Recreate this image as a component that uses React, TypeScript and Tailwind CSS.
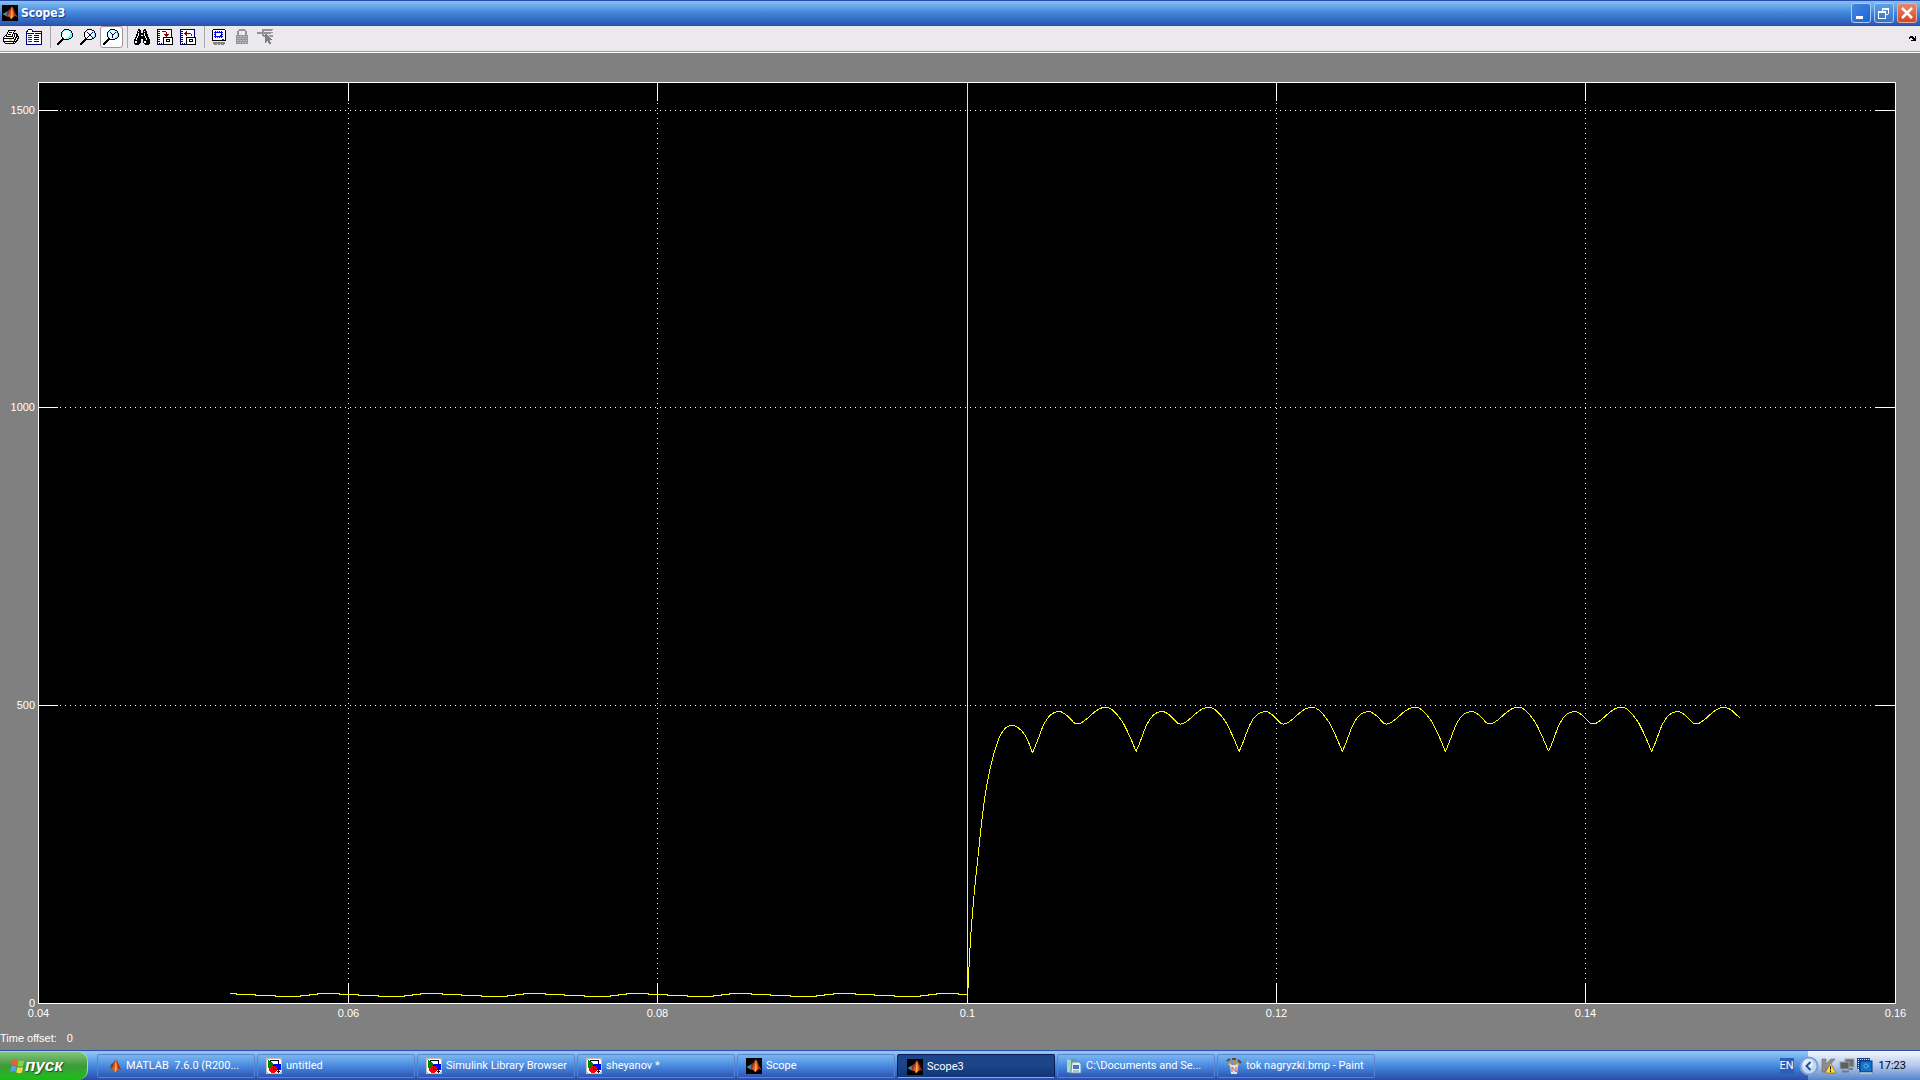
import React from 'react';

const INK: Record<string, string> = {
  k: '#000000',
  w: '#ffffff',
  n: '#000080',
  b: '#0000ff',
  c: '#70f4f8',
  r: '#900000',
  R: '#ff0000',
  y: '#f0e000',
  g: '#808080',
  G: '#008000',
  s: '#c0c0c0',
  d: '#949494',
};

const ICONS = {
  print: [
    '................',
    '.....kkkkkkkk...',
    '.....kwwwwwk....',
    '....kwkkkwk.....',
    '....kwwwwwkkkk..',
    '...kwkkkwkwkwkk.',
    '..kkwwwwwkwkwkk.',
    '.kwkkkkkkkwkwkkk',
    'kwwwwwwwwwkwkkwk',
    'kkkkkkkkkkkwkwkk',
    'kwwwwwyyywwkkwk.',
    'kwwwwwyyywwkwkk.',
    'kkkkkkkkkkkkkk..',
    '.kwwwwwwwwkwk...',
    '..kkkkkkkkkk....',
    '................',
  ],
  params: [
    '..nnnn..........',
    '.nwwwwn.........',
    'nnwwwwnnnnnnnnnn',
    'nwwwwwwwwwwwwwwn',
    'nnnnnnnnwnnnnnnn',
    'nwwwwwwwwwwwwwwn',
    'nwrrrrwwnnnnnwwn',
    'nwwwwwwwwwwwwwwn',
    'nwrrrrwwnnnnnwwn',
    'nwwwwwwwwwwwwwwn',
    'nwrrrrwwnnnnnwwn',
    'nwwwwwwwwwwwwwwn',
    'nwrrrrwwnnnnnwwn',
    'nwwwwwwwwwwwwwwn',
    'nwwwwwwwwwwwwwwn',
    'nnnnnnnnnnnnnnnn',
  ],
  zoom: [
    '.......kkkkk....',
    '......kccwwckk..',
    '.....kcwwwwwwck.',
    '....kcwwwwwwwck.',
    '....kcwwwwwwwwck',
    '....kwwwwwwwwcck',
    '....kwwwwwwwwcck',
    '....kwwwwwwwccck',
    '.....kwwwwwccck.',
    '.....kkwwccckk..',
    '....kkkkkkkk....',
    '...kkk..........',
    '..kkk...........',
    '.kkk............',
    'kkk.............',
    'kk..............',
  ],
  zoomX: [
    '.......kkkkk....',
    '......kcwwwckk..',
    '.....kcwwwwwwck.',
    '....kcwnwwwwnck.',
    '....kwwwnwwnwwck',
    '....kwwwwnnwwwck',
    '....kwwwwnnwwwck',
    '....kwwwnwwnwcck',
    '.....kwnwwwwnck.',
    '.....kkwwwwckk..',
    '....kkkkkkkk....',
    '...kkk..........',
    '..kkk...........',
    '.kkk............',
    'kkk.............',
    'kk..............',
  ],
  zoomY: [
    '.......kkkkk....',
    '......kcwwwckk..',
    '.....kcwwwwwwck.',
    '....kcwnwwwwnck.',
    '....kwwwnwwnwwck',
    '....kwwwwnnwwwck',
    '....kwwwwnwwwwck',
    '....kcwwwnwwwcck',
    '.....kwwwnwwcck.',
    '.....kkwwwcckk..',
    '....kkkkkkkk....',
    '...kkk..........',
    '..kkk...........',
    '.kkk............',
    'kkk.............',
    'kk..............',
  ],
  find: [
    '....kk....kk....',
    '....kkk..kkk....',
    '...kwkk..kwkk...',
    '...kkkk..kkkk...',
    '...kwkkkkkwkk...',
    '..kkwkkkkkwkkk..',
    '..kkwkkwwkwkkk..',
    '..kwkkkkkkkwkk..',
    '.kkwkkkkkkkwkkk.',
    '.kwkkkkkkkkkwkk.',
    'kkwkkkkwwkkkwkkk',
    'kkkkkkk..kkkkkkk',
    'kwwkkkk..kwwkkkk',
    'kwwkkkk..kwwkkkk',
    'kkkkkk....kkkkkk',
    '.kkkk......kkkk.',
  ],
  saveAxes: [
    'nnnnnnnnnnnnnnn.',
    'nwwwwwwwwwwwwwn.',
    'nnnwwrrrrwwwwwn.',
    'nwwwwwwwwrwwwwn.',
    'nnnwwwwwwrwwwwn.',
    'nwwwwwwrrrrrwwn.',
    'nnnwwwwwrrrwwwn.',
    'nwwwwwwwwrwwwwn.',
    'nnnwwwkkkkkkkkkk',
    'nwwwwwkwwwwwwwwk',
    'nnnwwwkwwkkkkwwk',
    'nwwwwwkwwkwwkwwk',
    'nnnwwwkwwkkkkwwk',
    'nwwwwwkwwwwwwwwk',
    'nwnwnwkwwwwwwwwk',
    'nnnnnnkkkkkkkkkk',
  ],
  restoreAxes: [
    'nnnnnnnnnnnnnnn.',
    'nwwwwwwwwwwwwwn.',
    'nnnwwwrwwwwwwwn.',
    'nwwwwrrwwwwwwwn.',
    'nnnwrrrrrrrwwwn.',
    'nwwwwrrwwwwrwwn.',
    'nnnwwwrwwwwrwwn.',
    'nwwwwwwwwwwwwwn.',
    'nnnwwwkkkkkkkkkk',
    'nwwwwwkwwwwwwwwk',
    'nnnwwwkwwkkkkwwk',
    'nwwwwwkwwkwwkwwk',
    'nnnwwwkwwkkkkwwk',
    'nwwwwwkwwwwwwwwk',
    'nwnwnwkwwwwwwwwk',
    'nnnnnnkkkkkkkkkk',
  ],
  floating: [
    '..kkkkkkkkkkkk..',
    '.kwwwwwwwwwwwwk.',
    '.kwwbwbwbwbwwwk.',
    '.kwbbbbbbbbbwwk.',
    '.kwwbwwwwwbwwwk.',
    '.kwbbwwwwwbbwwk.',
    '.kwwbwwwwbbwwwk.',
    '.kwbbbbbbbbbwwk.',
    '.kwwbwbwbwbwwwk.',
    '.kwwwwwwwwwwwwk.',
    '.kwwwwwwwwwrrwk.',
    '.kkkkkkkkkkkkkk.',
    '................',
    '..gggggggggggg..',
    '..gdgdgdgdgdgg..',
    '...ggg.gg.ggg...',
  ],
  lock: [
    '.....dddddd.....',
    '....dddddddd....',
    '...dd......dd...',
    '...dd......dd...',
    '...dd......dd...',
    '...dd......dd...',
    '..dddddddddddd..',
    '..dssdssdssdsd..',
    '..dddddddddddd..',
    '..dsdssdssdssd..',
    '..dddddddddddd..',
    '..dssdssdssdsd..',
    '..dddddddddddd..',
    '..dsdssdssdssd..',
    '..dddddddddddd..',
    '................',
  ],
  select: [
    '.....ddddddddddd',
    '.....dddddddddd.',
    '.....dd.........',
    'dddddddddddddddd',
    'dddddddddddddd..',
    '.....dd.gg......',
    '.....dddggg.dddd',
    '......ddgggg.ddd',
    '........ggggg...',
    '........gggggg..',
    '........ggggggg.',
    '........ggggg...',
    '........gg.gg...',
    '........g..ggg..',
    '............gg..',
    '................',
  ],
  model: [
    'ssssssssssssssss',
    'sswwwwwwwwwwwwss',
    'swGwkkkkkkkkkwws',
    'swGGkwwwwwwwkwws',
    'swGGGGwwwwwwkwws',
    'swGGGGGwwwwwkwws',
    'swGGGGGGbbbbbbbs',
    'swGGGGGkbbbbbbbs',
    'swGGGRRRRbbbbbbs',
    'swGGRRRkRRbbbbbs',
    'swwRRRRkRRRbbbbs',
    'swwRRRRkkkRbkbbs',
    'swwRRRRRRRRwkwws',
    'swwwRRRRRRwkkkws',
    'sswwwRRRRwwwkwss',
    'ssssssssssssssss',
  ],
  corner: [
    '.......',
    '.kkk..k',
    'kkkkk.k',
    'k..kkkk',
    '....kkk',
    '..kkkkk',
  ],
};

type IconName = keyof typeof ICONS;

function PixelIcon({ name }: { name: IconName }) {
  const rows = ICONS[name];
  return (
    <svg
      width={rows[0].length}
      height={rows.length}
      viewBox={`0 0 ${rows[0].length} ${rows.length}`}
      shapeRendering="crispEdges"
      className="shrink-0"
      aria-hidden="true"
    >
      {rows.map((row, y) =>
        row.split('').map((ch, x) =>
          ch === '.' ? null : <rect key={`${x}-${y}`} x={x} y={y} width="1" height="1" fill={INK[ch]} />
        )
      )}
    </svg>
  );
}

function MatlabIcon({ dark = true }: { dark?: boolean }) {
  return (
    <svg width="16" height="16" viewBox="0 0 16 16" className="shrink-0" aria-hidden="true">
      {dark && <rect width="16" height="16" fill="#000" />}
      <path d="M0.5 9 L5 6.5 L7 8 L4.5 11.5 Z" fill="#3f8fae" />
      <path d="M5 6.5 L7.5 4.5 L9.5 1.5 L7.5 9 L4.5 11.5 Z" fill="#7b3a2e" />
      <path d="M9.8 1 C11.5 3 12.5 8 15.5 12 C13 10 12 11 9 14.5 C8 12 7 11 4.5 11.5 C7.5 10 8.5 4 9.8 1 Z" fill="#e0561c" />
      <path d="M9.9 2.5 C10.5 6 11 8 10.5 12.5 L9 14 C8.3 12.5 9.3 7 9.9 2.5 Z" fill="#f8b050" />
      <path d="M10.5 2 C12 4 13 9 15.5 12 L12.5 10.5 Z" fill="#9c2410" />
    </svg>
  );
}

function FolderIcon() {
  return (
    <svg width="16" height="16" viewBox="0 0 16 16" className="shrink-0" aria-hidden="true">
      <path d="M1 1 L10 1 L10 15 L1 13 Z" fill="#5fa58e" />
      <path d="M1 1 L5 2 L5 15 L1 14 Z" fill="#a5d8c4" />
      <path d="M6 4 H13 L15 6 V15 H5 V13 Z" fill="#e8eef4" stroke="#6f8ba0" strokeWidth="1" />
      <rect x="7" y="7" width="6" height="4" fill="#3b7cc4" />
      <path d="M7 13 H13" stroke="#7795aa" />
    </svg>
  );
}

function PaintIcon() {
  return (
    <svg width="16" height="16" viewBox="0 0 16 16" className="shrink-0" aria-hidden="true">
      <path d="M6 8 L2 2 M8 8 L8 1 M9 8 L13 3" stroke="#c88a48" strokeWidth="2" />
      <path d="M1 3 L4 1 M6 1 H10 M12 2 L15 5" stroke="#67432f" strokeWidth="2" />
      <path d="M3 6 L6 8 M12 6 L10 8" stroke="#e8d05c" strokeWidth="2" />
      <path d="M4 7 H12 L11 16 H5 Z" fill="#dce2ec" />
      <path d="M6 14 V9 L10 14 V9" stroke="#d6524b" fill="none" />
    </svg>
  );
}

function WindowsFlag() {
  return (
    <svg width="15" height="16" viewBox="0 0 16 16" className="shrink-0" aria-hidden="true">
      <path d="M2.5 2 Q5 0 8 1.5 L7 7.5 Q4.5 6 1.5 7.5 Z" fill="#ec6130" />
      <path d="M9 2 Q12 3.5 15 2 L14 8 Q11 9.5 8 8 Z" fill="#8bd047" />
      <path d="M1.3 8.5 Q4 7 6.8 8.5 L5.8 14 Q3 12.5 0.3 14 Z" fill="#5aa0f0" />
      <path d="M7.8 9 Q10.8 10.5 13.8 9 L12.8 15 Q10 16.5 6.8 15 Z" fill="#fbd34a" />
    </svg>
  );
}

type Pt = [number, number];

// Catmull-Rom through the samples, cusps are kept by drawing each lobe pair on its own
function smooth(pts: Pt[]) {
  let d = `M${pts[0][0]} ${pts[0][1]}`;
  for (let i = 0; i < pts.length - 1; i++) {
    const p0 = pts[i - 1] || pts[i];
    const p1 = pts[i];
    const p2 = pts[i + 1];
    const p3 = pts[i + 2] || p2;
    d += ` C${p1[0] + (p2[0] - p0[0]) / 6} ${p1[1] + (p2[1] - p0[1]) / 6} ${p2[0] - (p3[0] - p1[0]) / 6} ${p2[1] - (p3[1] - p1[1]) / 6} ${p2[0]} ${p2[1]}`;
  }
  return d;
}

const PERIOD = 103.1;

const RISE: Pt[] = [
  [967.5, 1000], [968.5, 977], [970.5, 940], [973, 907], [975.5, 880], [978.5, 852], [982, 819], [986, 790],
  [990.5, 767], [995, 750], [1000, 736], [1006, 727.5], [1012.5, 725.5], [1018.5, 728], [1025, 735], [1030, 746], [1032.5, 753],
];

const RIPPLE: Pt[] = [
  [0, 751.5], [4, 742], [11, 724], [18, 714.5], [26, 711.5], [32, 714], [37, 718.5], [42, 723.5], [47, 723.5],
  [53, 719.5], [61, 712.5], [67, 708.5], [73, 707.5], [79, 709.5], [89, 721], [97, 737], [103.1, 751.5],
];

const LAST: Pt[] = [...RIPPLE.slice(0, 13), [79, 709.5], [85, 715], [88.5, 718]];

const IDLE: Pt[] = [[0, 993.5], [22, 994.5], [41, 995.5], [61, 996.5], [87, 995.5], [95, 994.5]];

function idlePath() {
  let d = 'M230 993.5 H236 V994.5 H255 V995.5 H275 V996.5 H300 V995.5 H309 V994.5';
  for (let x = 317; x < 967; x += PERIOD) {
    for (const [dx, y] of IDLE) {
      const px = Math.min(Math.round(x + dx), 967);
      d += ` H${px} V${y}`;
    }
  }
  return d;
}

const X_TICKS = [
  { x: 38.5, label: '0.04' },
  { x: 348.5, label: '0.06' },
  { x: 657.5, label: '0.08' },
  { x: 967.5, label: '0.1' },
  { x: 1276.5, label: '0.12' },
  { x: 1585.5, label: '0.14' },
  { x: 1895.5, label: '0.16' },
];

const Y_TICKS = [
  { y: 110.5, label: '1500' },
  { y: 407.5, label: '1000' },
  { y: 705.5, label: '500' },
  { y: 1003.5, label: '0' },
];

function ScopePlot() {
  return (
    <svg viewBox="0 53 1920 977" className="block min-h-0 w-full flex-1" role="img" aria-label="Scope3">
      <rect x="38.5" y="82.5" width="1857" height="921" fill="#000" stroke="#fff" shapeRendering="crispEdges" />
      <g stroke="#fff" shapeRendering="crispEdges">
        {X_TICKS.slice(1, -1).map(({ x }) => (
          <React.Fragment key={x}>
            <path d={`M${x} 82 V101 M${x} 984 V1003`} />
            <path d={`M${x} 103 V984`} strokeDasharray="1 4" />
          </React.Fragment>
        ))}
        {Y_TICKS.slice(0, -1).map(({ y }) => (
          <React.Fragment key={y}>
            <path d={`M38 ${y} H58 M1875 ${y} H1895`} />
            <path d={`M60 ${y} H1875`} strokeDasharray="1 4" />
          </React.Fragment>
        ))}
      </g>
      <g stroke="#ff0" fill="none" shapeRendering="crispEdges">
        <path d={idlePath()} />
        <path d="M967.5 83 V999" />
        <path d={smooth(RISE)} />
        {[0, 1, 2, 3, 4, 5, 6].map((i) => (
          <path
            key={i}
            d={smooth((i === 6 ? LAST : RIPPLE).map(([x, y]): Pt => [1033 + i * PERIOD + x, y]))}
          />
        ))}
      </g>
      <g fill="#fff" fontSize="11" className="font-['Liberation_Sans',Arial,sans-serif]">
        {X_TICKS.map(({ x, label }) => (
          <text key={label} x={x} y="1017" textAnchor="middle">{label}</text>
        ))}
        {Y_TICKS.map(({ y, label }) => (
          <text key={label} x="35" y={y + 3} textAnchor="end">{label}</text>
        ))}
      </g>
    </svg>
  );
}

const TOOLS: { icon: IconName; label: string }[][] = [
  [
    { icon: 'print', label: 'Print' },
    { icon: 'params', label: 'Parameters' },
  ],
  [
    { icon: 'zoom', label: 'Zoom' },
    { icon: 'zoomX', label: 'Zoom X-axis' },
    { icon: 'zoomY', label: 'Zoom Y-axis' },
  ],
  [
    { icon: 'find', label: 'Autoscale' },
    { icon: 'saveAxes', label: 'Save current axes settings' },
    { icon: 'restoreAxes', label: 'Restore saved axes settings' },
  ],
  [
    { icon: 'floating', label: 'Floating scope' },
    { icon: 'lock', label: 'Lock axes selection' },
    { icon: 'select', label: 'Signal selection' },
  ],
];

function Toolbar() {
  return (
    <div className="flex h-[27px] shrink-0 items-start border-b border-white bg-[#ece9ee] pr-1 shadow-[inset_0_-1px_0_#9c9c9c]">
      {TOOLS.map((group, i) => (
        <div key={i} className="flex items-center">
          {i > 0 && <div className="mx-[3px] h-[22px] w-[2px] border-r border-[#a8a8ac]" />}
          {group.map(({ icon, label }) => (
            <button
              key={icon}
              aria-label={label}
              aria-pressed={icon === 'zoomY'}
              className={`flex h-[22px] w-[23px] items-center ${
                icon === 'zoomY' ? 'rounded-[3px] border border-[#98989c] bg-white pl-[2px]' : 'pl-[3px]'
              }`}
            >
              <PixelIcon name={icon} />
            </button>
          ))}
        </div>
      ))}
      <button aria-label="Dock" className="mt-[9px] ml-auto">
        <PixelIcon name="corner" />
      </button>
    </div>
  );
}

function TitleBar() {
  return (
    <header className="flex h-[26px] shrink-0 items-center border-y border-[#2a4db0] bg-linear-to-b from-[#86c0f2] via-[#4186dc] to-[#2b55b0] pl-[2px] pr-[3px]">
      <MatlabIcon />
      <h1 className="ml-[3px] font-['DejaVu_Sans_Condensed','DejaVu_Sans',sans-serif] text-[12px] leading-4 font-bold text-white [text-shadow:1px_1px_0_#1c3c8c]">
        Scope3
      </h1>
      <div className="ml-auto flex gap-[3px]">
        <button aria-label="Minimize" className="h-5 w-5 rounded-[3px] border border-[#a4cdf5] bg-linear-to-br from-[#4787d8] to-[#1463e0]">
          <svg viewBox="0 0 18 18" className="block"><path d="M4 13.5 H11" stroke="#fff" strokeWidth="3" /></svg>
        </button>
        <button aria-label="Restore" className="h-5 w-5 rounded-[3px] border border-[#a4cdf5] bg-linear-to-b from-[#5f9fe6] to-[#3670c8]">
          <svg viewBox="0 0 18 18" className="block" fill="none" stroke="#fff" shapeRendering="crispEdges">
            <path d="M7 4.5 H14 M13.5 4 V10 M11 10.5 H13 M7.5 4 V7" />
            <path d="M7 5 H14" />
            <path d="M3.5 8 V14.5 H10.5 V8 M3 7.5 H11 M3 8.5 H11" />
          </svg>
        </button>
        <button aria-label="Close" className="h-5 w-5 rounded-[3px] border border-[#e8b0a8] bg-linear-to-b from-[#e88468] to-[#d8431c]">
          <svg viewBox="0 0 18 18" className="block"><path d="M4 4 L14 14 M14 4 L4 14" stroke="#fff" strokeWidth="2.5" /></svg>
        </button>
      </div>
    </header>
  );
}

const TASKS: { label: string; icon: React.ReactNode; active?: boolean }[] = [
  { label: 'MATLAB  7.6.0 (R200...', icon: <MatlabIcon dark={false} /> },
  { label: 'untitled', icon: <PixelIcon name="model" /> },
  { label: 'Simulink Library Browser', icon: <PixelIcon name="model" /> },
  { label: 'sheyanov *', icon: <PixelIcon name="model" /> },
  { label: 'Scope', icon: <MatlabIcon /> },
  { label: 'Scope3', icon: <MatlabIcon />, active: true },
  { label: 'C:\\Documents and Se...', icon: <FolderIcon /> },
  { label: 'tok nagryzki.bmp - Paint', icon: <PaintIcon /> },
];

function Tray() {
  return (
    <div className="ml-auto flex h-full shrink-0 items-center">
      <span className="flex h-4 w-[14px] items-center justify-center bg-[#2f5fb4] text-white">EN</span>
      <div className="ml-[14px] flex h-full items-center bg-linear-to-b from-[#f4f7fd] via-[#b4c9ec] to-[#5585cc] pr-[14px] text-black">
        <button aria-label="Show hidden icons" className="-ml-[9px]">
          <svg width="20" height="20" viewBox="0 0 20 20" className="block">
            <circle cx="10" cy="10" r="8.5" fill="#c3d7f3" stroke="#7e9fd6" strokeWidth="2" />
            <circle cx="9" cy="8" r="5" fill="#f2f7fe" opacity=".7" />
            <path d="M11.5 6 L7.5 10 L11.5 14" fill="none" stroke="#1f4f94" strokeWidth="2" />
          </svg>
        </button>
        <svg width="16" height="16" viewBox="0 0 16 16" className="ml-[2px]">
          <path d="M1 1 H5 V6 L10 1 H14 L8 8 L12 14 H8 L5 10 V14 H1 Z" fill="#8d8d8d" stroke="#5f5f5f" strokeWidth=".5" />
          <path d="M9.5 5 L15 15 H4 Z" fill="#ffd83c" stroke="#98761c" strokeWidth=".8" />
          <path d="M9.5 8 V11.5 M9.5 12.5 V14" stroke="#000" />
        </svg>
        <svg width="16" height="16" viewBox="0 0 16 16" className="ml-[2px]">
          <rect x="6" y="1" width="9" height="8" fill="#6a6f73" stroke="#a0a5a8" />
          <path d="M9 11 H14" stroke="#777" strokeWidth="2" />
          <rect x="1" y="4" width="9" height="7" fill="#5a5f63" stroke="#9ba0a4" />
          <path d="M3 13.5 H10" stroke="#777" strokeWidth="2" />
        </svg>
        <svg width="16" height="16" viewBox="0 0 16 16" className="ml-[2px]">
          <path d="M0 0 H13 V13 H3 L0 10 Z" fill="#1b3f84" />
          <path d="M1 1.5 H12 M1.5 1 V12" stroke="#dfe8f5" strokeDasharray="1 1" />
          <rect x="3" y="3" width="12" height="11" fill="#1474c8" stroke="#0c3470" />
          <circle cx="9" cy="8" r="2" fill="none" stroke="#bfe4ff" strokeDasharray="1 1" />
          <path d="M3 15 H15" stroke="#e4e4d8" />
        </svg>
        <time className="ml-[6px]">17:23</time>
      </div>
    </div>
  );
}

function Taskbar() {
  return (
    <footer className="flex h-[30px] shrink-0 items-center border-t border-[#2a50b0] bg-linear-to-b from-[#8cc4f6] from-5% via-[#4084dc] via-55% to-[#2a4ca8] font-['Roboto','Liberation_Sans',sans-serif] text-[11px] leading-4 text-white">
      <button className="flex h-full w-[88px] shrink-0 items-center rounded-r-[10px] border-t border-r border-[#a8dca0] bg-linear-to-b from-[#84c47c] via-[#3b9a38] to-[#10c010] pl-[10px]">
        <WindowsFlag />
        <span className="font-['Liberation_Sans',Arial,sans-serif] text-[17px] leading-5 font-bold italic [text-shadow:1px_1px_1px_#145010]">
          пуск
        </span>
      </button>
      <nav className="ml-[9px] flex min-w-0 gap-[2px] pt-px">
        {TASKS.map(({ label, icon, active }) => (
          <button
            key={label}
            className={`flex h-6 w-[158px] min-w-0 items-center rounded-[2px] border pr-1 ${
              active
                ? 'border-[#0c1c50] border-b-[#88a8e0] bg-linear-to-b from-[#1c4488] from-50% to-[#103478] pt-[2px] pl-[9px]'
                : 'border-[#5c84cc] bg-linear-to-b from-[#7cb6f0] via-[#4a8ae0] via-50% to-[#2c56b4] pl-2'
            }`}
          >
            {icon}
            <span className="ml-1 truncate whitespace-pre">{label}</span>
          </button>
        ))}
      </nav>
      <Tray />
    </footer>
  );
}

export default function App() {
  return (
    <div className="flex h-screen flex-col overflow-hidden bg-[#808080]">
      <TitleBar />
      <Toolbar />
      <main className="flex min-h-0 flex-1 flex-col">
        <ScopePlot />
        <div className="flex h-5 shrink-0 items-center gap-[10px] pb-1 font-['Liberation_Sans',Arial,sans-serif] text-[11px] leading-4 text-white">
          <span>Time offset:</span>
          <span>0</span>
        </div>
      </main>
      <Taskbar />
    </div>
  );
}
